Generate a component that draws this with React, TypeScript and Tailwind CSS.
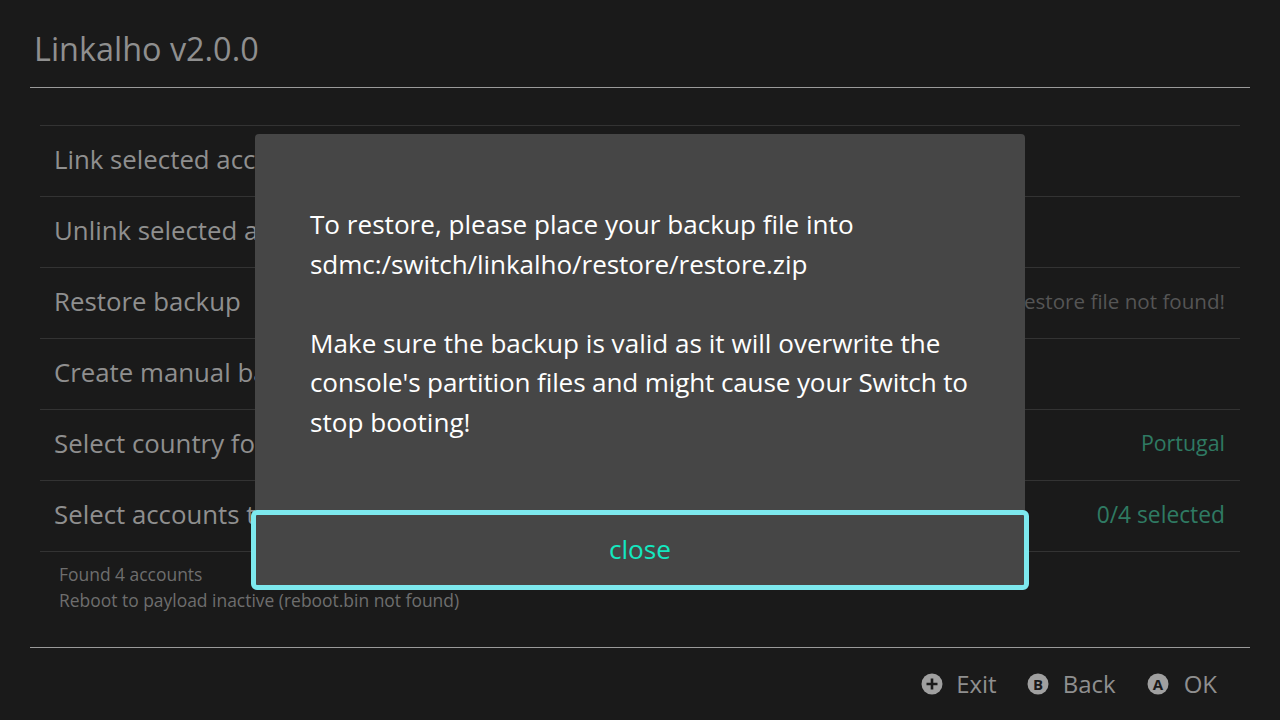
const rows: [string, string, string][] = [
  ["Link selected accounts", "", ""],
  ["Unlink selected accounts", "", ""],
  ["Restore backup", "Restore file not found!", "mb-[2px] text-[20.6px] text-[#555555]"],
  ["Create manual backup", "", ""],
  ["Select country for all accounts", "Portugal", "mb-[2px] text-[21.4px] text-[#2f7a63]"],
  ["Select accounts to link", "0/4 selected", "text-[22.8px] text-[#2f7a63]"],
];

function Hint({ glyph, label, className, gap }: { glyph: string; label: string; className: string; gap: string }) {
  return (
    <div className={`flex items-center ${className}`}>
      <svg width="22" height="22" viewBox="0 0 22 22" className={gap}>
        <circle cx="11" cy="11" r="10.5" fill="#a0a0a0" />
        {glyph === "+" ? (
          <path d="M11 5.5v11M5.5 11h11" stroke="#1a1a1a" strokeWidth="2.6" fill="none" />
        ) : (
          <text x="11" y="16.5" textAnchor="middle" fontSize="15" fontWeight="700" fill="#1a1a1a" fontFamily="'Open Sans', sans-serif">
            {glyph}
          </text>
        )}
      </svg>
      <span className="text-[24px] leading-none text-[#8f8f8f]">{label}</span>
    </div>
  );
}

export default function App() {
  return (
    <div className="relative w-[1280px] h-[720px] overflow-hidden bg-[#1a1a1a] font-['Open_Sans',sans-serif]">
      <div className="flex flex-col h-full px-[30px]">
        <div className="h-[88px] shrink-0 border-b border-[#9a9a9a] pl-[4px] pt-[26px]">
          <div className="text-[32.4px] leading-[44px] text-[#8f8f8f]">Linkalho v2.0.0</div>
        </div>
        <div className="flex-1 px-[10px] pt-[37px]">
          <div className="border-t border-[#333333]">
            {rows.map(([name, value, color]) => (
              <div key={name} className="h-[71px] border-b border-[#333333] flex items-center justify-between pl-[14px] pr-[15px] pb-[2px]">
                <span className="text-[25.8px] text-[#8f8f8f] leading-none">{name}</span>
                <span className={`leading-none ${color}`}>{value}</span>
              </div>
            ))}
          </div>
          <div className="pl-[19px] pt-[9px] text-[17.45px] leading-[26px] text-[#6e6e6e]">
            <div>Found 4 accounts</div>
            <div>Reboot to payload inactive (reboot.bin not found)</div>
          </div>
        </div>
        <div className="h-[73px] shrink-0 border-t border-[#9a9a9a] flex items-center justify-end pr-[33px]">
          <Hint glyph="+" label="Exit" className="mr-[30px]" gap="mr-[13px]" />
          <Hint glyph="B" label="Back" className="mr-[31px]" gap="mr-[14px]" />
          <Hint glyph="A" label="OK" className="" gap="mr-[15px]" />
        </div>
      </div>

      <div className="absolute left-[255px] top-[134px] w-[770px] h-[452px] bg-[#464646] rounded-[4px] flex flex-col">
        <div className="flex-1 pl-[55px] pt-[71px] text-[26.1px] leading-[39.6px] text-white whitespace-nowrap">
          <div>To restore, please place your backup file into</div>
          <div className="tracking-[-0.08px]">sdmc:/switch/linkalho/restore/restore.zip</div>
          <div className="h-[39.6px]" />
          <div>Make sure the backup is valid as it will overwrite the</div>
          <div className="tracking-[-0.14px]">console's partition files and might cause your Switch to</div>
          <div>stop booting!</div>
        </div>
      </div>
      <div className="absolute left-[251px] top-[510px] w-[778px] h-[80px] rounded-[6px] border-[5px] border-[#7de9ee] bg-[#464646] flex items-center justify-center pb-[2px]">
        <span className="text-[26.2px] leading-none text-[#14e8c0]">close</span>
      </div>
    </div>
  );
}
